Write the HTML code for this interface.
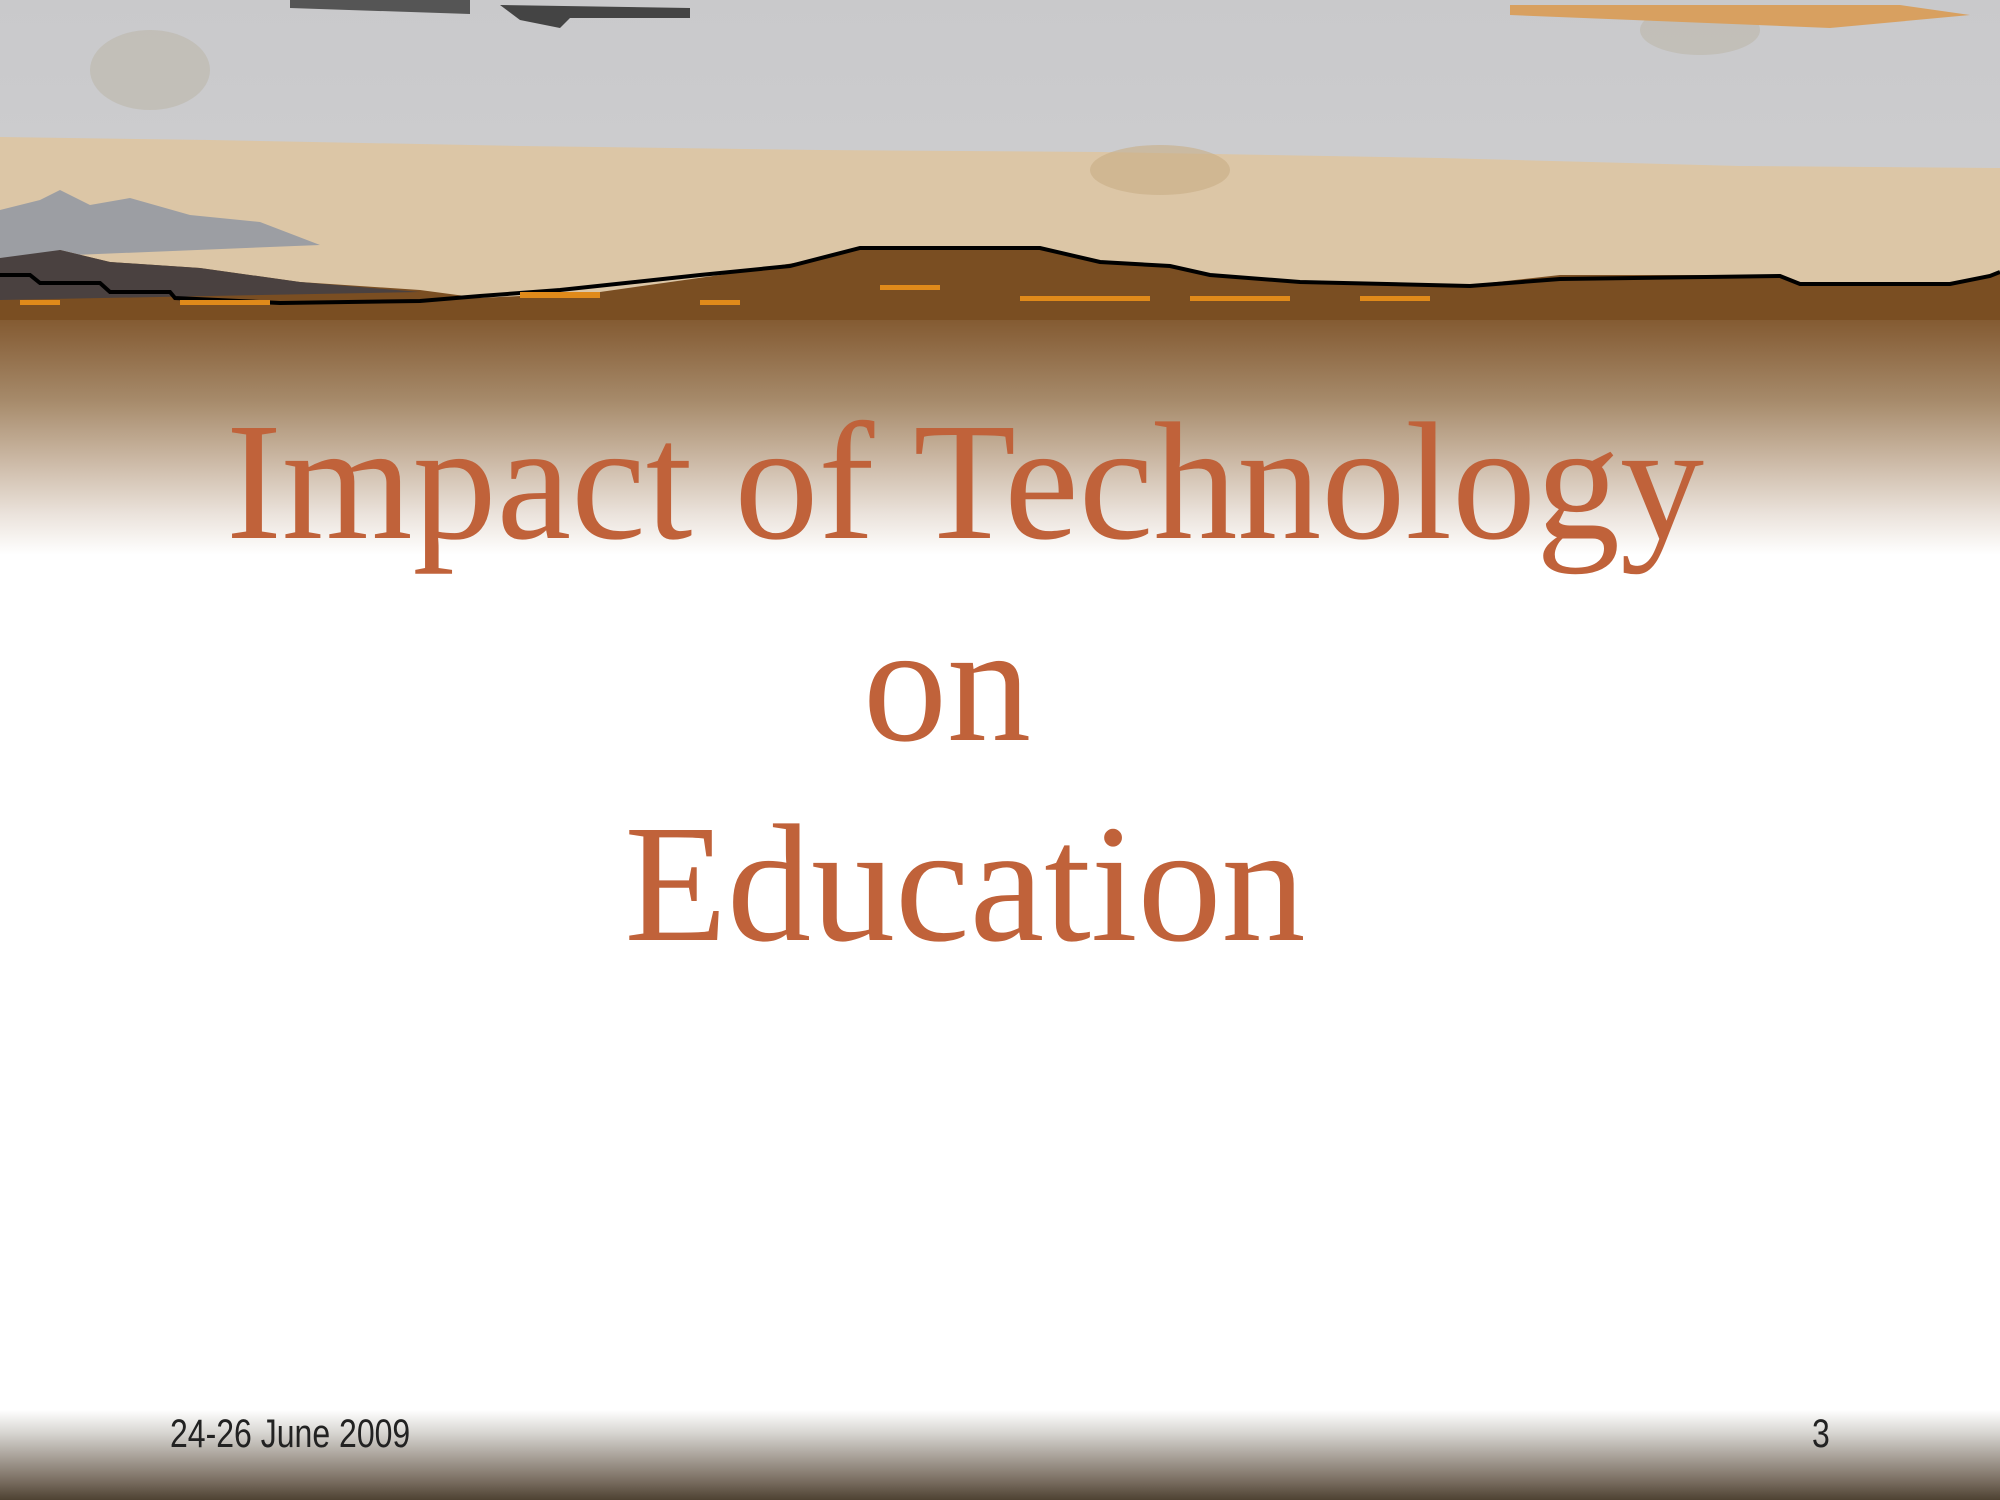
<!DOCTYPE html>
<html><head><meta charset="utf-8"><style>
html,body{margin:0;padding:0;width:2000px;height:1500px;overflow:hidden;background:#fff;position:relative}
.bg{position:absolute;left:0;top:0;width:2000px;height:560px;
background:linear-gradient(to bottom,#7a4e22 0px,#7a4e22 295px,#8c6640 340px,#a68a6a 400px,#cbb8a4 460px,#ebe3dc 515px,#fff 555px)}
.sky{position:absolute;left:0;top:0;width:2000px;height:320px}
.t{position:absolute;left:0;width:1930px;text-align:center;color:#c0623a;font-family:"Liberation Serif",serif;font-size:168px;line-height:1;white-space:nowrap}
.foot{position:absolute;left:0;top:1410px;width:2000px;height:90px;background:linear-gradient(to bottom,#fff 0%,#d8d6d2 25%,#a39b92 55%,#776b5e 80%,#4e4232 100%)}
.f{position:absolute;font-family:"Liberation Sans",sans-serif;font-size:40px;color:#222;top:1412px;transform:scaleX(0.80);transform-origin:0 0}
</style></head><body>
<div class="bg"></div>
<svg class="sky" width="2000" height="320" viewBox="0 0 2000 320" preserveAspectRatio="none">
<defs><linearGradient id="g" x1="0" y1="0" x2="0" y2="1"><stop offset="0" stop-color="#c9c9cb"/><stop offset="1" stop-color="#cfcfd1"/></linearGradient></defs>
<rect x="0" y="0" width="2000" height="300" fill="url(#g)"/>
<polygon points="0,137 210,140 520,146 820,150 1100,152 1440,158 1740,166 2000,168 2000,300 0,300" fill="#dcc6a6"/>
<ellipse cx="150" cy="70" rx="60" ry="40" fill="#b9b3a4" opacity=".5"/>
<ellipse cx="1160" cy="170" rx="70" ry="25" fill="#c8ae86" opacity=".6"/>
<ellipse cx="1700" cy="30" rx="60" ry="25" fill="#b9b3a4" opacity=".5"/>
<polygon points="1510,5 1900,5 1970,15 1830,28 1510,15" fill="#d8a060"/>
<polygon points="290,0 470,0 470,14 290,8" fill="#555"/>
<polygon points="500,5 690,8 690,18 570,18 560,28 520,20" fill="#444"/>
<polygon points="0,210 40,200 60,190 90,205 130,198 190,215 260,222 320,245 0,258" fill="#9c9ea3"/>
<polygon points="0,275 30,262 60,250 110,262 200,268 300,282 420,290 480,298 600,292 720,275 800,262 860,248 1040,248 1100,262 1170,266 1210,275 1300,282 1470,285 1560,275 1780,275 1800,283 1950,283 2000,272 2000,320 0,320" fill="#7a4e22"/>
<polygon points="0,258 60,250 110,262 200,268 300,282 420,292 0,300" fill="#4a4140"/>
<polyline points="0,275 30,275 40,283 100,283 110,292 170,292 175,298 280,303 420,301 480,296 560,290 700,275 790,266 860,248 1040,248 1100,262 1170,266 1210,275 1300,282 1470,286 1560,279 1780,276 1800,284 1950,284 1990,276 2000,272" fill="none" stroke="#000" stroke-width="4"/>
<g fill="#e08a1a">
<rect x="20" y="300" width="40" height="5"/><rect x="180" y="300" width="90" height="5"/><rect x="520" y="292" width="80" height="6"/><rect x="700" y="300" width="40" height="5"/><rect x="880" y="285" width="60" height="5"/><rect x="1020" y="296" width="130" height="5"/><rect x="1190" y="296" width="100" height="5"/><rect x="1360" y="296" width="70" height="5"/>
</g>
</svg>
<div class="t" style="top:398px">Impact of Technology</div>
<div class="t" style="top:600px;left:-18px">on</div>
<div class="t" style="top:800px">Education</div>
<div class="foot"></div>
<div class="f" style="left:170px">24-26 June 2009</div>
<div class="f" style="left:1812px">3</div>
</body></html>
